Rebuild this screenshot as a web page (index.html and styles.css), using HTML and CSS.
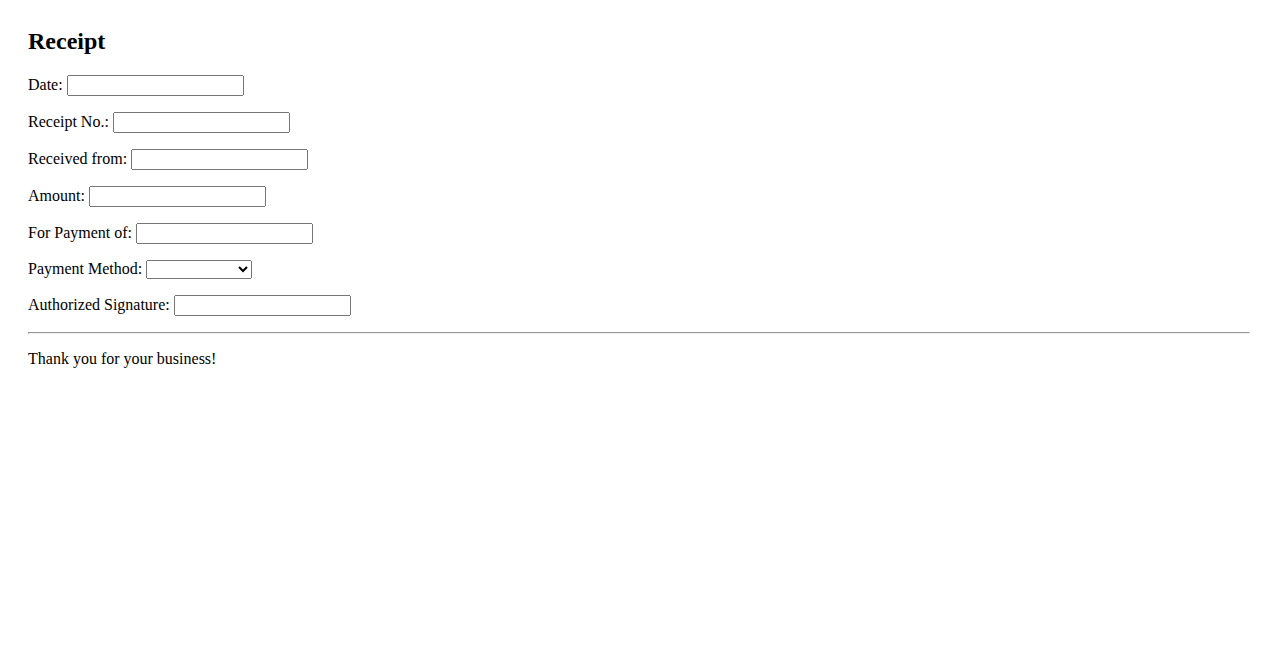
FILE: index.html
```html
<!DOCTYPE html>
<html lang="en">
<head>
  <meta charset="UTF-8">
  <meta name="viewport" content="width=device-width, initial-scale=1">
  <title>Receipt</title>
  <link rel="stylesheet" href="styles.css">
</head>
<body>

  <div class="receipt">
    <h2>Receipt</h2>

    <div class="field">
      <label for="date">Date:</label>
      <input type="text" id="date">
    </div>
    <div class="field">
      <label for="receiptNo">Receipt No.:</label>
      <input type="text" id="receiptNo">
    </div>
    <div class="field">
      <label for="receivedFrom">Received from:</label>
      <input type="text" id="receivedFrom">
    </div>
    <div class="field">
      <label for="amount">Amount:</label>
      <input type="text" id="amount">
    </div>
    <div class="field">
      <label for="paymentFor">For Payment of:</label>
      <input type="text" id="paymentFor">
    </div>
    <div class="field">
      <label for="method">Payment Method:</label>
      <select id="method">
        <option></option>
        <option>Cash</option>
        <option>Check</option>
        <option>Credit Card</option>
      </select>
    </div>
    <div class="field">
      <label for="signature">Authorized Signature:</label>
      <input type="text" id="signature">
    </div>

    <hr>
    <p>Thank you for your business!</p>
  </div>

</body>
</html>
```

FILE: styles.css
```css
body {
  font-family: "Liberation Serif", "Times New Roman", serif;
  margin: 8px;
  padding: 20px;
}
h2 {
  margin: 0 0 20px;
  font-size: 24px;
}
.field {
  margin-bottom: 16px;
}
input {
  box-sizing: border-box;
  width: 177px;
}
select {
  width: 106px;
}
hr {
  margin: 16px 0 8px;
}
p {
  margin: 16px 0;
}
```
